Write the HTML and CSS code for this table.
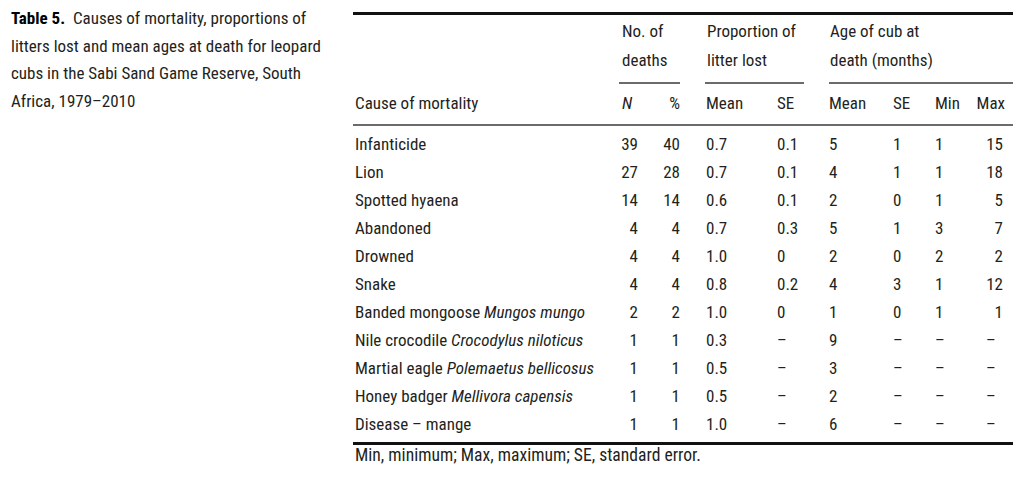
FILE: index.html
```html
<!DOCTYPE html>
<html lang="en">
<head>
<meta charset="utf-8">
<title>Table 5</title>
<link rel="stylesheet" href="styles.css">
</head>
<body>
<div class="page">
  <p class="caption"><b>Table 5.</b>&nbsp; Causes of mortality, proportions of<br>litters lost and mean ages at death for leopard<br>cubs in the Sabi Sand Game Reserve, South<br>Africa, 1979–2010</p>
  <div class="table">
    <div class="thead">
      <div class="row spans">
        <div class="sp sp-deaths">No. of<br>deaths</div>
        <div class="sp sp-prop">Proportion of<br>litter lost</div>
        <div class="sp sp-age">Age of cub at<br>death (months)</div>
      </div>
      <div class="row sub">
        <div>Cause of mortality</div>
        <div class="n-head"><i>N</i></div>
        <div>%</div>
        <div>Mean</div>
        <div>SE</div>
        <div>Mean</div>
        <div>SE</div>
        <div>Min</div>
        <div class="max-head">Max</div>
      </div>
    </div>
    <div class="tbody">
      <div class="row"><div>Infanticide</div><div>39</div><div>40</div><div>0.7</div><div>0.1</div><div>5</div><div>1</div><div>1</div><div>15</div></div>
      <div class="row"><div>Lion</div><div>27</div><div>28</div><div>0.7</div><div>0.1</div><div>4</div><div>1</div><div>1</div><div>18</div></div>
      <div class="row"><div>Spotted hyaena</div><div>14</div><div>14</div><div>0.6</div><div>0.1</div><div>2</div><div>0</div><div>1</div><div>5</div></div>
      <div class="row"><div>Abandoned</div><div>4</div><div>4</div><div>0.7</div><div>0.3</div><div>5</div><div>1</div><div>3</div><div>7</div></div>
      <div class="row"><div>Drowned</div><div>4</div><div>4</div><div>1.0</div><div>0</div><div>2</div><div>0</div><div>2</div><div>2</div></div>
      <div class="row"><div>Snake</div><div>4</div><div>4</div><div>0.8</div><div>0.2</div><div>4</div><div>3</div><div>1</div><div>12</div></div>
      <div class="row"><div>Banded mongoose <i>Mungos mungo</i></div><div>2</div><div>2</div><div>1.0</div><div>0</div><div>1</div><div>0</div><div>1</div><div>1</div></div>
      <div class="row"><div>Nile crocodile <i>Crocodylus niloticus</i></div><div>1</div><div>1</div><div>0.3</div><div>–</div><div>9</div><div>–</div><div>–</div><div class="dash">–</div></div>
      <div class="row"><div>Martial eagle <i>Polemaetus bellicosus</i></div><div>1</div><div>1</div><div>0.5</div><div>–</div><div>3</div><div>–</div><div>–</div><div class="dash">–</div></div>
      <div class="row"><div>Honey badger <i>Mellivora capensis</i></div><div>1</div><div>1</div><div>0.5</div><div>–</div><div>2</div><div>–</div><div>–</div><div class="dash">–</div></div>
      <div class="row"><div>Disease – mange</div><div>1</div><div>1</div><div>1.0</div><div>–</div><div>6</div><div>–</div><div>–</div><div class="dash">–</div></div>
    </div>
    <p class="note">Min, minimum; Max, maximum; SE, standard error.</p>
  </div>
</div>
</body>
</html>
```
FILE: styles.css
```css
html, body {
  margin: 0;
  padding: 0;
  background: #ffffff;
}

body {
  font-family: "Roboto Condensed", "Roboto", sans-serif;
  font-size: 17px;
  font-stretch: condensed;
  color: #231f20;
}

.page {
  display: flex;
  align-items: flex-start;
}

.caption {
  flex: 0 0 353px;
  box-sizing: border-box;
  margin: 0;
  padding: 5px 0 0 11px;
  line-height: 27.5px;
  white-space: nowrap;
}

.caption b {
  font-weight: 700;
  color: #000;
}

.table {
  flex: 0 0 660px;
  margin-top: 12px;
  border-top: 3px solid #111;
}

.row {
  display: grid;
  grid-template-columns: 257px 30px 43px 88px 44px 72px 42px 46px 38px;
  line-height: 28px;
  white-space: nowrap;
}

/* column alignment */
.row > div:nth-child(1) { padding-left: 2px; }
.row > div:nth-child(2) { text-align: right; padding-right: 2px; }
.row > div:nth-child(3) { text-align: right; padding-right: 3px; }
.row > div:nth-child(4) { padding-left: 23px; }
.row > div:nth-child(5) { padding-left: 6px; }
.row > div:nth-child(6) { padding-left: 14px; }
.row > div:nth-child(7) { padding-left: 6px; }
.row > div:nth-child(8) { padding-left: 6px; }
.row > div:nth-child(9) { text-align: right; padding-right: 10px; }
.row > div.dash { text-align: left; padding-left: 11px; padding-right: 0; }

/* header */
.row.spans {
  padding-top: 2px;
  line-height: 29px;
}

.row.spans > div.sp {
  padding: 0 0 7px;
  border-bottom: 2px solid #6b6b6b;
  text-align: left;
}

.row.spans > div.sp-deaths {
  grid-column: 2 / 4;
  margin: 0 3px 0 9px;
  padding-left: 3px;
}

.row.spans > div.sp-prop {
  grid-column: 4 / 6;
  margin: 0 11px 0 22px;
  padding-left: 2px;
}

.row.spans > div.sp-age {
  grid-column: 6 / 10;
  margin: 0 0 0 14px;
  padding-left: 1px;
}

.row.sub {
  padding: 5px 0 7px;
  border-bottom: 2px solid #6b6b6b;
}

.row.sub > div.n-head {
  text-align: left;
  padding-left: 12px;
  padding-right: 0;
}

.row.sub > div.max-head {
  padding-right: 8px;
}

.tbody {
  padding: 4px 0;
  border-bottom: 3px solid #111;
}

.note {
  margin: 0;
  padding-left: 2px;
  font-size: 17.6px;
  line-height: 20px;
}
```
